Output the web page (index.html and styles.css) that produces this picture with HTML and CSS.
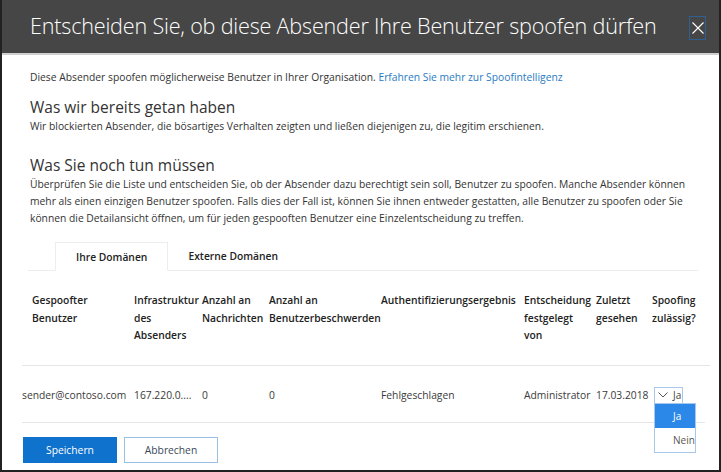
FILE: index.html
```html
<!DOCTYPE html>
<html lang="de">
<head>
<meta charset="utf-8">
<link rel="stylesheet" href="styles.css">
</head>
<body>
<div class="dialog">
  <header class="titlebar">
    <h1 class="title">Entscheiden Sie, ob diese Absender Ihre Benutzer spoofen dürfen</h1>
    <button class="close" aria-label="Schließen">
      <svg width="12" height="12" viewBox="0 0 12 12"><path d="M0.5 0.5 L11.5 11.5 M11.5 0.5 L0.5 11.5" stroke="#fff" stroke-width="1.1" fill="none"/></svg>
    </button>
  </header>
  <main class="content">
    <p class="intro">Diese Absender spoofen möglicherweise Benutzer in Ihrer Organisation. <a href="#" class="link">Erfahren Sie mehr zur Spoofintelligenz</a></p>
    <h2 class="heading h-first">Was wir bereits getan haben</h2>
    <p class="text t-first">Wir blockierten Absender, die bösartiges Verhalten zeigten und ließen diejenigen zu, die legitim erschienen.</p>
    <h2 class="heading h-second">Was Sie noch tun müssen</h2>
    <p class="text para">Überprüfen Sie die Liste und entscheiden Sie, ob der Absender dazu berechtigt sein soll, Benutzer zu spoofen. Manche Absender können mehr als einen einzigen Benutzer spoofen. Falls dies der Fall ist, können Sie ihnen entweder gestatten, alle Benutzer zu spoofen oder Sie können die Detailansicht öffnen, um für jeden gespooften Benutzer eine Einzelentscheidung zu treffen.</p>
    <nav class="tabs">
      <span class="tab active">Ihre Domänen</span>
      <span class="tab">Externe Domänen</span>
    </nav>
    <div class="grid head">
      <div class="c first">Gespoofter Benutzer</div>
      <div class="c">Infrastruktur des Absenders</div>
      <div class="c">Anzahl an Nachrichten</div>
      <div class="c">Anzahl an Benutzerbeschwerden</div>
      <div class="c">Authentifizierungsergebnis</div>
      <div class="c">Entscheidung festgelegt von</div>
      <div class="c">Zuletzt gesehen</div>
      <div class="c">Spoofing zulässig?</div>
    </div>
    <div class="grid row">
      <div class="c">sender@contoso.com</div>
      <div class="c">167.220.0....</div>
      <div class="c">0</div>
      <div class="c">0</div>
      <div class="c">Fehlgeschlagen</div>
      <div class="c">Administrator</div>
      <div class="c">17.03.2018</div>
      <div class="c sel-cell">
        <div class="select">
          <svg width="10" height="6" viewBox="0 0 10 6"><path d="M0.5 0.5 L5 5 L9.5 0.5" stroke="#555" stroke-width="1" fill="none"/></svg>
          <span>Ja</span>
        </div>
        <ul class="options">
          <li class="opt on">Ja</li>
          <li class="opt">Nein</li>
        </ul>
      </div>
    </div>
    <div class="actions">
      <button class="btn primary">Speichern</button>
      <button class="btn secondary">Abbrechen</button>
    </div>
  </main>
</div>
</body>
</html>
```

FILE: styles.css
```css
* { box-sizing: border-box; }
html, body { margin: 0; padding: 0; }
body {
  width: 721px;
  height: 472px;
  background: #fff;
  font-family: "Open Sans", "Noto Sans", sans-serif;
  color: #333;
  overflow: hidden;
}
.dialog {
  width: 721px;
  height: 472px;
  border-left: 2px solid #222;
  border-right: 2px solid #222;
  border-bottom: 2px solid #222;
  display: flex;
  flex-direction: column;
}
.titlebar {
  height: 55px;
  flex: none;
  background: #464646;
  border-bottom: 2px solid #cfcfcf;
  display: flex;
  align-items: center;
  padding: 0 0 2px 28px;
}
.title {
  margin: 0;
  font-weight: 300;
  font-size: 21.6px;
  color: #fff;
  letter-spacing: -0.2px;
  flex: 1;
}
.close {
  width: 17px;
  height: 24px;
  margin-right: 13px;
  margin-top: 5px;
  background: transparent;
  border: 1px solid #2f5f93;
  padding: 0;
  display: flex;
  align-items: center;
  justify-content: center;
}
.content {
  flex: 1;
  padding: 0 0 0 28px;
  font-size: 10.3px;
}
.intro { margin: 14px 0 0; line-height: 16px; }
.link { color: #2a7ac4; text-decoration: none; }
.heading {
  margin: 0;
  font-weight: 400;
  font-size: 15.5px;
  line-height: 22px;
  color: #333;
}
.h-first { margin-top: 11px; }
.t-first { margin-top: 2px; }
.h-second { margin-top: 19px; }
.text { margin: 0; line-height: 17px; }
.para { padding-right: 18px; }
.tabs {
  display: flex;
  margin: 15px 0 0 -2px;
  height: 29px;
  border-bottom: 1px solid #ededed;
  width: 670px;
}
.tab {
  font-weight: 600;
  padding: 0 20px;
  display: flex;
  align-items: center;
  color: #222;
}
.tab.active {
  margin-left: 27px;
  border: 1px solid #ededed;
  border-bottom-color: #fff;
  margin-bottom: -1px;
  background: #fff;
}
.grid {
  display: grid;
  grid-template-columns: 112px 68px 67px 112px 143px 72px 56px 58px;
  margin-left: -8px;
  width: 688px;
}
.c { padding-right: 5px; }
.head {
  margin-top: 21px;
  font-weight: 600;
  line-height: 17.5px;
  height: 74px;
  border-bottom: 1px solid #e6e6e6;
  color: #222;
}
.head .first { padding-left: 10px; }
.row {
  height: 57px;
  width: 683px;
  align-items: center;
  border-bottom: 1px solid #e6e6e6;
  white-space: nowrap;
  color: #3a3a3a;
  padding-top: 2px;
}
.sel-cell { position: relative; padding-left: 2px; }
.select {
  width: 29px;
  height: 17px;
  border: 1px solid #a9c7ea;
  display: flex;
  align-items: center;
  gap: 5px;
  padding-left: 3px;
  font-size: 10px;
  color: #444;
}
.options {
  position: absolute;
  left: 2px;
  top: 16px;
  width: 42px;
  margin: 0;
  padding: 0;
  list-style: none;
  border: 1px solid #a9c7ea;
  background: #fff;
  z-index: 2;
}
.opt {
  height: 24px;
  line-height: 24px;
  padding-left: 18px;
  font-size: 10px;
  color: #555;
}
.opt.on { background: #2b88e8; color: #fff; }
.actions {
  display: flex;
  gap: 7px;
  margin: 14px 0 0 -7px;
}
.btn {
  width: 94px;
  height: 26px;
  font-family: inherit;
  font-size: 10.3px;
  padding: 0;
}
.primary { background: #0f72cc; color: #fff; border: 1px solid #0f72cc; }
.secondary { background: #fff; color: #3a4a5c; border: 1px solid #9bbfe3; }
```
